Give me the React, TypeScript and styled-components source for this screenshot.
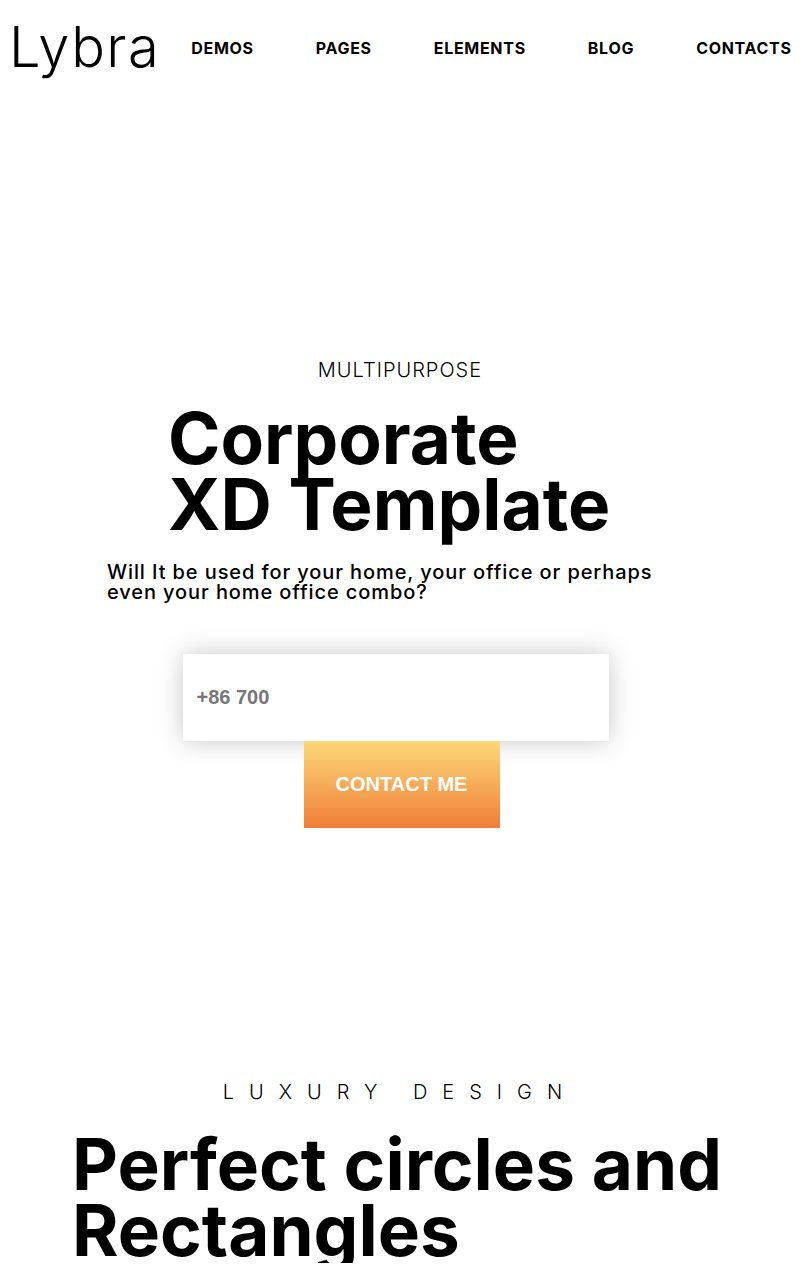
import React from "react";
import styled, { createGlobalStyle } from "styled-components";

const Global = createGlobalStyle`
  html, body { margin: 0; padding: 0; background: #fff; }
  body { font-family: Inter, "Noto Sans", sans-serif; color: #000; overflow-x: hidden; }
  * { box-sizing: border-box; }
`;

const Page = styled.div`
  width: 800px;
  display: flex;
  flex-direction: column;
`;

const Header = styled.header`
  height: 96px;
  display: flex;
  align-items: center;
  padding-left: 9px;
  white-space: nowrap;
`;

const Logo = styled.div`
  font-size: 56px;
  font-weight: 300;
  letter-spacing: 1.5px;
  line-height: 1;
  margin-top: -2px;
`;

const Nav = styled.nav`
  display: flex;
  gap: 62px;
  margin-left: 31px;
`;

const NavLink = styled.a`
  font-size: 16px;
  font-weight: 700;
  letter-spacing: 0.7px;
  color: #000;
  text-decoration: none;
  line-height: 1;
`;

const Hero = styled.section`
  display: flex;
  flex-direction: column;
  align-items: center;
  padding-top: 262px;
  height: 964px;
`;

const Eyebrow = styled.div<{ $spacing?: number }>`
  font-size: 20px;
  font-weight: 300;
  line-height: 24px;
  letter-spacing: ${(p) => p.$spacing ?? 1}px;
`;

const BigTitle = styled.h1<{ $left: number; $top: number }>`
  margin: ${(p) => p.$top}px 0 0 ${(p) => p.$left}px;
  align-self: flex-start;
  font-size: 71px;
  font-weight: 700;
  line-height: 66px;
  letter-spacing: 0px;
`;

const Line = styled.span`
  display: block;
`;

const Lead = styled.p`
  margin: 25px 0 0 0;
  align-self: flex-start;
  margin-left: 107px;
  font-size: 20px;
  font-weight: 500;
  letter-spacing: 0.9px;
  line-height: 20px;
  width: 570px;
`;

const Form = styled.div`
  margin-top: 52px;
  display: flex;
  flex-direction: column;
  align-items: center;
  margin-left: -9px;
`;

const Input = styled.input`
  width: 426px;
  height: 87px;
  border: none;
  outline: none;
  background: #fff;
  box-shadow: 0 0 24px rgba(0, 0, 0, 0.22);
  padding: 0 14px;
  font-family: "Liberation Sans", Arial, sans-serif;
  font-size: 20px;
  font-weight: 700;
  color: #777;
  &::placeholder { color: #777; }
`;

const Button = styled.button`
  margin-left: 12px;
  width: 196px;
  height: 87px;
  border: none;
  background: linear-gradient(180deg, #fcd978 0%, #f07e38 100%);
  color: #fff;
  font-family: "Liberation Sans", Arial, sans-serif;
  font-size: 20px;
  font-weight: 700;
  cursor: pointer;
`;

const Section = styled.section`
  display: flex;
  flex-direction: column;
  align-items: center;
  padding-top: 20px;
`;

export default function App() {
  return (
    <Page>
      <Global />
      <Header>
        <Logo>Lybra</Logo>
        <Nav>
          <NavLink href="#">DEMOS</NavLink>
          <NavLink href="#">PAGES</NavLink>
          <NavLink href="#">ELEMENTS</NavLink>
          <NavLink href="#">BLOG</NavLink>
          <NavLink href="#">CONTACTS</NavLink>
        </Nav>
      </Header>
      <Hero>
        <Eyebrow>MULTIPURPOSE</Eyebrow>
        <BigTitle $left={168} $top={23}>
          <Line>Corporate</Line>
          <Line>XD Template</Line>
        </BigTitle>
        <Lead>
          Will It be used for your home, your office or perhaps
          <br />
          even your home office combo?
        </Lead>
        <Form>
          <Input placeholder="+86 700" />
          <Button>CONTACT ME</Button>
        </Form>
      </Hero>
      <Section>
        <Eyebrow $spacing={15}>LUXURY DESIGN</Eyebrow>
        <BigTitle as="h2" $left={72} $top={27}>
          <Line>Perfect circles and</Line>
          <Line>Rectangles</Line>
        </BigTitle>
      </Section>
    </Page>
  );
}
